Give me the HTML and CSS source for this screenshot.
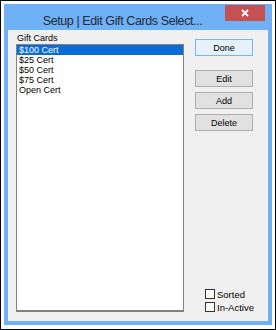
FILE: index.html
```html
<!DOCTYPE html>
<html lang="en">
<head>
  <meta charset="UTF-8" />
  <title>Setup | Edit Gift Cards Select...</title>
  <link rel="stylesheet" href="styles.css">
</head>
<body>
  <div class="shot">
    <div class="window">
      <div class="titlebar">
        <span class="title">Setup | Edit Gift Cards Select...</span>
        <button class="close" aria-label="Close">
          <svg width="8" height="8" viewBox="0 0 8 8"><path d="M1 1L7 7M7 1L1 7" stroke="#fff" stroke-width="1.8"/></svg>
        </button>
      </div>
      <div class="client">
        <div class="left">
          <div class="label">Gift Cards</div>
          <ul class="list">
            <li class="selected">$100 Cert</li>
            <li>$25 Cert</li>
            <li>$50 Cert</li>
            <li>$75 Cert</li>
            <li>Open Cert</li>
          </ul>
        </div>
        <div class="right">
          <button class="btn default">Done</button>
          <div class="actions">
            <button class="btn">Edit</button>
            <button class="btn">Add</button>
            <button class="btn">Delete</button>
          </div>
          <div class="checks">
            <label class="check"><span class="box"></span>Sorted</label>
            <label class="check"><span class="box"></span>In-Active</label>
          </div>
        </div>
      </div>
    </div>
  </div>
</body>
</html>
```

FILE: styles.css
```css
body {
  margin: 0;
  background: #ffffff;
  font-family: "Liberation Sans", Arial, sans-serif;
  font-size: 9px;
  color: #000000;
}
.shot {
  width: 276px;
  height: 330px;
  box-sizing: border-box;
  border: 1px solid #000000;
  padding: 3px 3px 4px 3px;
  display: flex;
}
.window {
  flex: 1;
  display: flex;
  flex-direction: column;
  background: #6eb1f5;
  padding: 0 4px 4px 4px;
}
.titlebar {
  height: 26px;
  display: flex;
  align-items: center;
  justify-content: center;
  padding-right: 31px;
  position: relative;
}
.title {
  font-size: 12.5px;
  letter-spacing: -0.4px;
  color: #1e2a3a;
  margin-top: 7px;
  white-space: nowrap;
}
.close {
  position: absolute;
  top: 1px;
  right: 3px;
  width: 40px;
  height: 16px;
  border: none;
  padding: 0;
  background: #c75050;
  display: flex;
  align-items: center;
  justify-content: center;
}
.client {
  flex: 1;
  background: #f0f0f0;
  display: flex;
  padding: 2px 0 9px 8px;
}
.left {
  display: flex;
  flex-direction: column;
  width: 168px;
}
.label {
  height: 12px;
  line-height: 12px;
  padding-left: 1px;
}
.list {
  flex: 1;
  margin: 0;
  padding: 0;
  list-style: none;
  background: #ffffff;
  border: 1px solid #828282;
  border-bottom-width: 2px;
}
.list li {
  height: 10px;
  line-height: 10px;
  padding-left: 2px;
}
.list li.selected {
  background: #0a6cd4;
  color: #ffffff;
}
.right {
  flex: 1;
  display: flex;
  flex-direction: column;
  align-items: flex-start;
  padding: 7px 0 0 11px;
}
.btn {
  width: 58px;
  height: 17px;
  box-sizing: border-box;
  border: 1px solid #adadad;
  background: #e1e1e1;
  font-family: inherit;
  font-size: 9px;
  color: #000000;
  padding: 0;
}
.btn.default {
  background: #e5f1fb;
  border-color: #7eb4ea;
}
.actions {
  display: flex;
  flex-direction: column;
  gap: 5px;
  margin-top: 14px;
}
.checks {
  margin-top: auto;
  margin-left: 10px;
  display: flex;
  flex-direction: column;
  gap: 3px;
}
.check {
  display: flex;
  align-items: center;
  gap: 2px;
  height: 10px;
  font-size: 9.5px;
}
.box {
  width: 8px;
  height: 8px;
  border: 1px solid #333333;
  background: #ffffff;
}
```
